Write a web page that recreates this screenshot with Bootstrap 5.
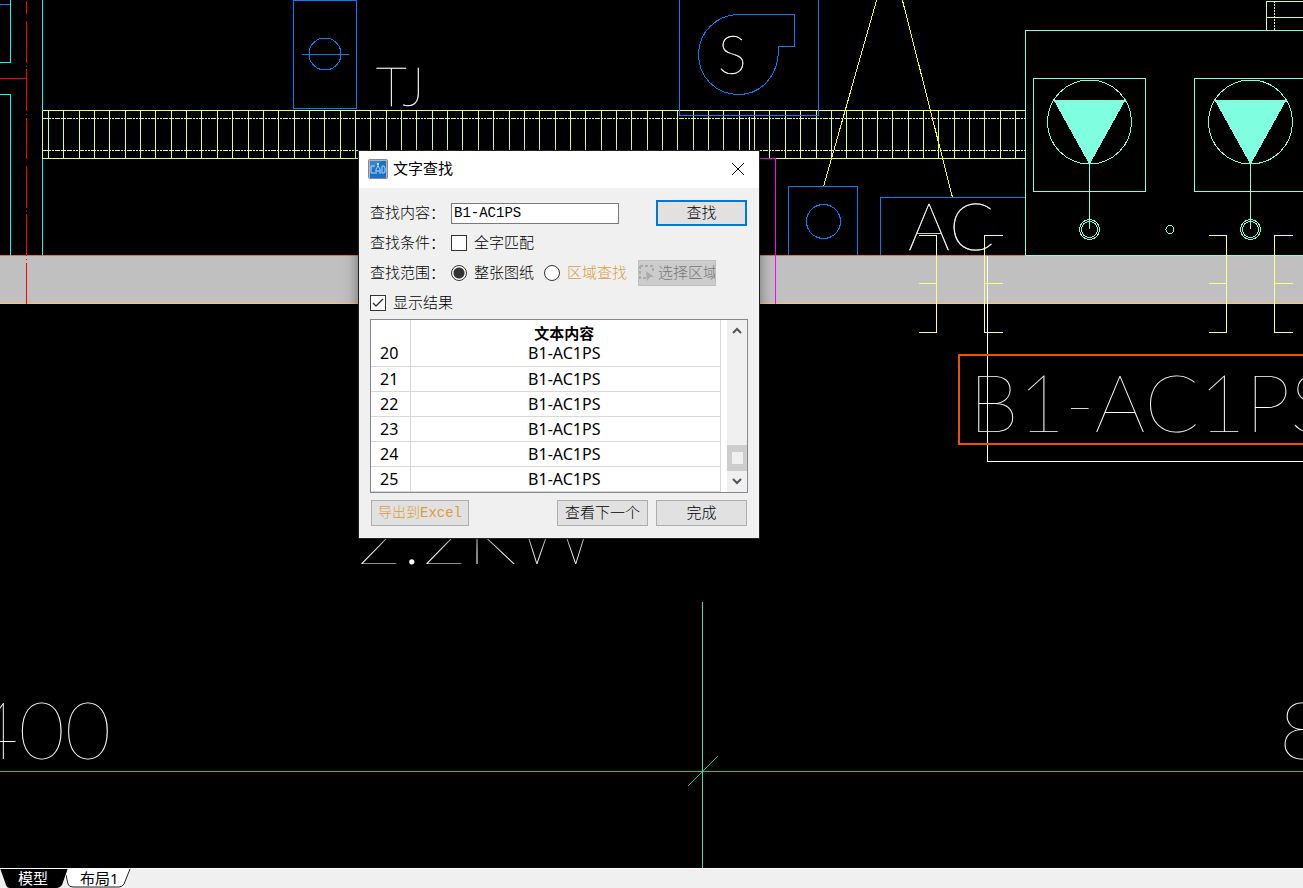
<!DOCTYPE html>
<html lang="zh-CN">
<head>
<meta charset="utf-8">
<meta name="viewport" content="width=device-width, initial-scale=1">
<title>文字查找</title>
<link rel="stylesheet" href="https://cdn.jsdelivr.net/npm/bootstrap@5.3.0/dist/css/bootstrap.min.css">
<style>
  :root { --face: #f0f0f0; --ink: #000; --song: "Liberation Sans", "Noto Sans CJK SC", sans-serif; }
  body { font: 15px/20px var(--song); color: var(--ink); background: #000; }
  .drawing { width: 100%; height: 100%; fill: none; shape-rendering: crispEdges; }
  .drawing text { fill: #fff; font-family: Lato, sans-serif; font-weight: 100; }
  .txt-l { font-size: 80px; } .txt-m { font-size: 66px; } .txt-s { font-size: 54px; }
  .drawing .txt-m, .drawing .txt-s { stroke: #fff; stroke-width: .4; }
  .blue { stroke: #007fff; } .lime { stroke: #dfff7f; } .mint { stroke: #7fffdf; }
  .pale { stroke: #ffff7f; } .cyan { stroke: #0ff; } .red { stroke: #f00; } .white { stroke: #fff; }
  .yellow { stroke: #ff0; } .magenta { stroke: #f0f; } .dim { stroke: #19c48f; } .dim-light { stroke: #4fd8ae; }
  .blue, .mint, .pale, .cyan, .dim, .magenta { stroke-linecap: square; }

  .find-dialog { left: 359px; top: 151px; width: 400px; background: var(--face); box-shadow: 0 0 0 1px #222, 0 4px 14px rgba(0,0,0,.5); font-weight: 300; }
  .title-bar { height: 37px; padding-left: 9px; padding-right: 14px; padding-bottom: 2px; font-weight: 400; }
  .title-bar span { margin-left: 5px; }
  .close-x { width: 14px; height: 14px; }
  .dialog-body { padding: 10px 12px 12px 11px; }
  .line-row { height: 30px; }
  .line-row .tick + label { margin-left: 7px; }
  .line-label { width: 81px; }
  .line-row input[type=text] { width: 168px; height: 21px; padding: 0 2px; border: 1px solid #7a7a7a; background: #fff; font: 14px/19px "Liberation Mono", monospace; }
  .win-btn { height: 26px; width: 91px; padding: 0; border: 1px solid #adadad; border-radius: 0; background: #e1e1e1; font: inherit; color: var(--ink); }
  .win-btn.is-default { border: 2px solid #0078d7; }
  .win-btn.gold, .gold { color: #dc9b3c; }
  .win-btn:disabled { background: #ccc; border-color: #bfbfbf; color: #777; opacity: 1; }
  .pick-btn { width: 78px; margin-left: 11px; }
  .export-btn { width: 98px; font-family: "Liberation Mono", "Noto Sans CJK SC", monospace; font-size: 14px; }
  .tick { appearance: none; width: 16px; height: 16px; margin: 0; border: 1px solid #333; background: #fff center/14px no-repeat; flex: none; }
  .tick:checked { background-image: url("data:image/svg+xml,%3Csvg xmlns='http://www.w3.org/2000/svg' viewBox='0 0 14 14'%3E%3Cpath d='M2 7l3 3 7-7' fill='none' stroke='%23333' stroke-width='1.4'/%3E%3C/svg%3E"); }
  .tick[type=radio] { border-radius: 50%; }
  .tick[type=radio]:checked { background-image: radial-gradient(circle, #333 0 5px, transparent 6px); }
  .area-tick { margin-left: 10px; }
  .result-box { height: 174px; margin-top: 1px; margin-right: -1px; border: 1px solid #828790; background: #fff; }
  .result-grid { width: 350px; font: 16px/20px "Noto Sans", "Noto Sans CJK SC", sans-serif; border-collapse: collapse; text-align: center; }
  .result-grid td, .result-grid th { padding: 0 2px 0 0; border-right: 1px solid #d8d8d8; }
  .result-grid thead th { height: 21px; padding-top: 5px; line-height: 16px; font-size: 15px; }
  .result-grid td { height: 25px; border-bottom: 1px solid #d8d8d8; }
  .num-col { width: 39px; }
  .scroll-bar { width: 20px; background: var(--face); }
  .scroll-thumb { height: 26px; background: #cdcdcd; }
  .scroll-thumb span { width: 11px; height: 12px; background: var(--face); }
  .foot-row { padding: 7px 0 0 1px; }
  .sheet-tabs { height: 20px; background: var(--face); border-top: 1px solid #fff; }
  .sheet-tab { height: 19px; font: 15px/19px "Noto Sans", "Noto Sans CJK SC", sans-serif; text-decoration: none; }
  .sheet-tab.is-current { width: 66px; padding-left: 18px; }
  .sheet-tab.is-next { padding-left: 14px; }
</style>
</head>
<body class="vh-100 d-flex flex-column overflow-hidden">
<main class="flex-grow-1 position-relative overflow-hidden">
  <svg class="drawing d-block" role="img" aria-label="图纸">
    <!-- wall band -->
    <rect x="0" y="255" width="100%" height="49" fill="#c0c0c0"/>
    <path stroke="#e07f1e" d="M0 255.5H3000"/><path stroke="#ffbf7f" d="M0 303.5H3000"/>
    <g transform="translate(.5 .5)">
      <!-- left walls and axis -->
      <path class="blue" d="M-1 4H10"/>
      <path class="cyan" d="M10 0V62H-1M-1 94H10V255M42 0V254"/>
      <path class="red" d="M-1 78H26M26 0V13M26 20V62M26 65V66M26 68V110M26 113V114M26 117V158M26 165V207M26 210V211M26 213V255M26 258V259M26 262V303"/>
      <!-- duct with hatch -->
      <path class="lime" d="M42 110H1025M42 158H1025M42 110V158"/>
      <path class="lime" stroke-width="48" stroke-dasharray="1 14.35" d="M47.5 134H1025"/>
      <path class="lime" stroke-dasharray="5 1 2 1 2 1" d="M42 118H1025M42 150H1025"/>
      <path class="lime" d="M1266 0V30M1266 1H3000M1266 17H3000"/><path class="lime" stroke-dasharray="2 1" d="M1274 0V30"/>
      <!-- equipment -->
      <path class="blue" d="M293 0H356V108H293ZM302 54H348M679 0V115H818V0M738 14H794V46H778C779 76 760 94 738 94C715 94 698 76 698 54C698 32 716 14 738 14M788 254V186H857V254M880 254V197H1025"/>
      <circle class="blue" cx="324.5" cy="53.5" r="16"/><circle class="blue" cx="823" cy="221" r="17"/>
      <path class="white" d="M749 116V158"/>
      <path class="yellow" d="M876 0L823 186M902 0L952 197"/>
      <path class="magenta" d="M759 158H775V303"/>
      <!-- pumps -->
      <path class="mint" d="M1025 255V30H3000M1025 255H3000"/>
      <g class="mint" id="pump"><path d="M1033 78H1145V191H1033ZM1089 163V228"/><circle cx="1089" cy="121.5" r="42"/><path fill="#7fffdf" d="M1054 100H1124L1089 163Z"/><circle cx="1089" cy="229" r="10"/><circle cx="1089" cy="229" r="8"/></g>
      <use href="#pump" x="161"/>
      <circle class="mint" cx="1169.5" cy="229" r="4"/>
      <!-- leader and marked text -->
      <path class="white" d="M987 255V461H3000"/>
      <g class="pale" id="clamp"><path d="M919 235H936V332H919M919 283H936M1002 235H984V332H1002M984 283H1002"/></g>
      <use class="pale" href="#clamp" x="290"/>
      <path class="dim" d="M-1 771H3000M688 785L717 756"/>
      <path class="dim-light" d="M702 601V3000"/>
    </g>
    <rect x="959" y="355" width="2000" height="89" stroke="#f05000" stroke-width="2"/>
    <text class="txt-s" x="376" y="106">TJ</text>
    <text class="txt-s" x="718" y="74">S</text>
    <text class="txt-m" x="908" y="250">AC</text>
    <text class="txt-l" x="969" y="432">B1-AC1PS</text>
    <text class="txt-l" x="356" y="564">2.2KW</text>
    <text class="txt-l" x="-28" y="759">400</text>
    <text class="txt-l" x="1279" y="759">8</text>
  </svg>

  <form class="find-dialog position-absolute" role="dialog" aria-label="文字查找">
    <header class="title-bar bg-white d-flex align-items-center">
      <svg width="20" height="20" viewBox="0 0 20 20" aria-hidden="true"><rect width="20" height="20" rx="2" fill="#858b92"/><rect x="1" y="1" width="18" height="18" fill="#b9b5ae"/><rect x="2" y="2" width="16" height="17" fill="#1671c9"/><path d="M2 2H14L2 12Z" fill="#2d85d8"/><path d="M7 7H3V14H7M8 15V10L10 7L12 10V15M8 12H12M14 7H16L17 9V13L16 14H14ZM10 4V8" fill="none" stroke="#b9d7f2"/><circle cx="10" cy="5" r="1" fill="#fff"/></svg>
      <span>文字查找</span>
      <button type="button" class="btn p-0 border-0 ms-auto d-flex" aria-label="关闭"><svg class="close-x" viewBox="0 0 14 14"><path d="M1 1L13 13M13 1L1 13" stroke="#000" fill="none"/></svg></button>
    </header>
    <div class="dialog-body">
      <div class="line-row d-flex align-items-center">
        <label class="line-label" for="q">查找内容：</label>
        <input id="q" type="text" value="B1-AC1PS">
        <button type="button" class="btn win-btn is-default ms-auto">查找</button>
      </div>
      <div class="line-row d-flex align-items-center">
        <span class="line-label">查找条件：</span>
        <input class="tick" type="checkbox" id="whole"><label for="whole">全字匹配</label>
      </div>
      <div class="line-row d-flex align-items-center">
        <span class="line-label">查找范围：</span>
        <input class="tick" type="radio" name="scope" id="all" checked><label for="all">整张图纸</label>
        <input class="tick area-tick" type="radio" name="scope" id="area"><label class="gold" for="area">区域查找</label>
        <button type="button" class="btn win-btn pick-btn d-flex align-items-center overflow-hidden text-nowrap" disabled>
          <svg class="flex-shrink-0 me-1" width="15" height="16" viewBox="0 0 15 16" aria-hidden="true"><path d="M1 1H14V7M1 1V13H7" fill="none" stroke="#aaa" stroke-width="2" stroke-dasharray="3 2"/><path d="M7 6L15 12L11 12L8 16Z" fill="#aaa"/></svg>选择区域
        </button>
      </div>
      <div class="line-row d-flex align-items-center">
        <input class="tick" type="checkbox" id="show" checked><label for="show">显示结果</label>
      </div>
      <div class="result-box d-flex justify-content-between overflow-hidden">
        <table class="result-grid">
          <thead><tr><th class="num-col"></th><th>文本内容</th></tr></thead>
          <tbody>
            <tr><td>20</td><td>B1-AC1PS</td></tr>
            <tr><td>21</td><td>B1-AC1PS</td></tr>
            <tr><td>22</td><td>B1-AC1PS</td></tr>
            <tr><td>23</td><td>B1-AC1PS</td></tr>
            <tr><td>24</td><td>B1-AC1PS</td></tr>
            <tr><td>25</td><td>B1-AC1PS</td></tr>
          </tbody>
        </table>
        <div class="scroll-bar d-flex flex-column align-items-center py-1">
          <svg width="12" height="14" viewBox="0 0 12 14"><path d="M2 9L6 5L10 9" fill="none" stroke="#555" stroke-width="2"/></svg>
          <div class="scroll-thumb w-100 mt-auto d-flex align-items-center justify-content-center"><span></span></div>
          <svg width="12" height="17" viewBox="0 0 12 17"><path d="M2 8L6 12L10 8" fill="none" stroke="#555" stroke-width="2"/></svg>
        </div>
      </div>
      <div class="foot-row d-flex gap-2">
        <button type="button" class="btn win-btn export-btn gold me-auto">导出到Excel</button>
        <button type="button" class="btn win-btn">查看下一个</button>
        <button type="button" class="btn win-btn">完成</button>
      </div>
    </div>
  </form>
</main>
<nav class="sheet-tabs d-flex flex-shrink-0" aria-label="图纸空间">
  <a href="#" class="sheet-tab is-current position-relative text-white"><svg class="position-absolute top-0 start-0" width="68" height="19"><path d="M0 -1H68L62 16Q60 19 57 19H10Q7 19 6 16Z" fill="#000"/></svg><span class="position-relative">模型</span></a>
  <a href="#" class="sheet-tab is-next position-relative text-black"><svg class="position-absolute top-0 start-0" width="68" height="19"><path d="M2 0H64L58 15Q56 18 53 18H7Q3 18 2 15L0 9Z" fill="#fff"/><path d="M0 6L2 15Q3 18 7 18H53Q56 18 58 15L64 0" fill="none" stroke="#222"/></svg><span class="position-relative">布局1</span></a>
</nav>
<script src="https://cdn.jsdelivr.net/npm/bootstrap@5.3.0/dist/js/bootstrap.bundle.min.js"></script>
</body>
</html>
